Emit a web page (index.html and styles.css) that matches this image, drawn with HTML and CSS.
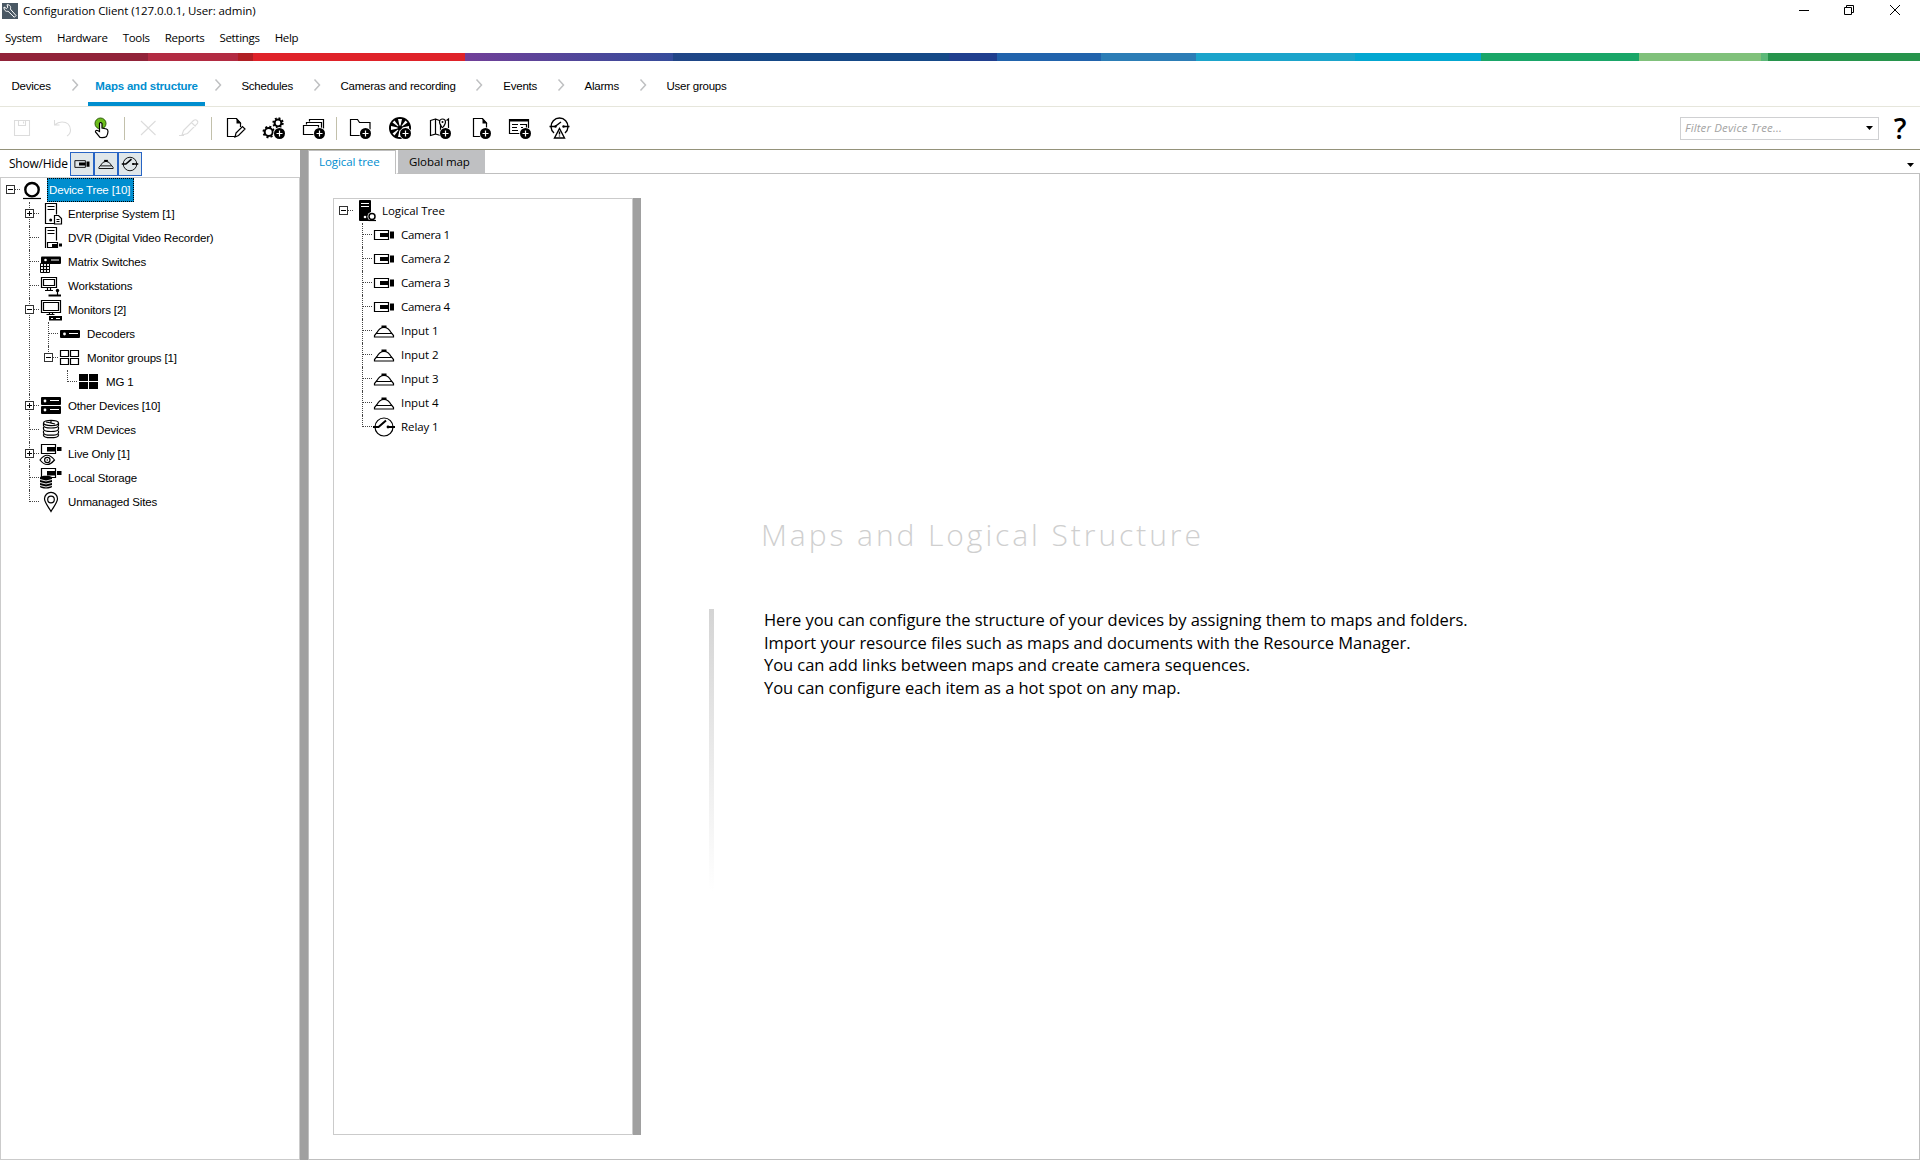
FILE: index.html
```html
<!DOCTYPE html>
<html lang="en">
<head>
<meta charset="utf-8">
<title>Configuration Client</title>
<link rel="stylesheet" href="styles.css">
</head>
<body>
<svg class="sprite" aria-hidden="true">
  <defs>
    <g id="plus"><circle cx="17.5" cy="17.5" r="6.2" fill="#fff"/><circle cx="17.5" cy="17.5" r="5.5"/><path d="M14.5 17.5h6M17.5 14.5v6" stroke="#fff" stroke-width="1.2"/></g>
    <symbol id="i-camera" viewBox="0 0 24 24"><path d="M2.5 7.5h14v9h-14z" class="ln"/><path d="M8 10h8.500v4H8zM18 8.500h4v7h-4z"/></symbol>
    <symbol id="i-input" viewBox="0 0 24 24"><path d="M2.500 18v-1.500L5 13.500Q7.500 8.500 12 8.500T19 13.500l2.500 3v1.500z M4.500 14.500h15" class="ln"/><path d="M9.500 6.500h5V9h-5z"/></symbol>
    <symbol id="i-relay" viewBox="0 0 24 24"><circle cx="12" cy="12" r="9" class="ln"/><path d="M1 12h5.500L14 5.500M16 12h7" class="ln2"/><circle cx="16" cy="12" r="1.400"/></symbol>
    <symbol id="i-root" viewBox="0 0 24 24"><circle cx="12" cy="11.700" r="6.700" fill="none" stroke="#000" stroke-width="2.400"/><path d="M3 20.500h18" class="ln"/></symbol>
    <symbol id="i-enterprise" viewBox="0 0 24 24"><path d="M15 21.500H6.500v-20h11v11M8.500 4.500h7M8.500 7.500h7" class="ln"/><circle cx="11.700" cy="18" r="1.500"/><path d="M15.500 13.500h4l3 3v5.500h-7zM17.500 17.500h3M17.500 19.500h3" class="ln"/></symbol>
    <symbol id="i-dvr" viewBox="0 0 24 24"><path d="M6.500 22v-20.500h11v13M8.500 4.500h7M8.500 7.500h7M8.500 16.500h10v5h-10z" class="ln"/><path d="M13 18h6v3h-6zM20 17.500h3v3h-3z"/></symbol>
    <symbol id="i-matrix" viewBox="0 0 24 24"><rect x="2" y="6.500" width="20" height="7.500" rx="1"/><circle cx="6.500" cy="10" r="1.300" fill="#fff"/><path d="M12 10h8" stroke="#fff"/><path d="M1.500 13.500h9v9h-9z" fill="#fff" stroke="#000"/><path d="M4.500 13.500v9M7.500 13.500v9M1.500 16.500h9M1.500 19.500h9" class="ln"/></symbol>
    <symbol id="i-workstation" viewBox="0 0 24 24"><path d="M2.500 3.500h15v10h-15zM4.500 5.500h11v6h-11zM8.500 14v2.500M11.500 14v2.500M6 16.500h8M18.500 17v4" class="ln"/><circle cx="18.500" cy="16.500" r="1.700"/><path d="M9.500 21.500H22" class="ln2"/></symbol>
    <symbol id="i-monitor" viewBox="0 0 24 24"><path d="M2.500 2.500h19v12h-19zM4.500 4.500h15v8h-15zM10.500 15v2M13.500 15v2M7.500 16.500h8" class="ln"/><path d="M10 18h13v4.500H10z"/><path d="M12 20.500h2M17 20.500h4" stroke="#fff"/></symbol>
    <symbol id="i-decoder" viewBox="0 0 24 24"><rect x="2" y="8" width="20" height="8" rx="1"/><circle cx="6.500" cy="12" r="1.400" fill="#fff"/><path d="M11 11.500h9" stroke="#fff"/></symbol>
    <symbol id="i-group" viewBox="0 0 24 24"><path d="M2.500 4.500h8v6h-8zM12.500 4.500h8v6h-8zM2.500 12.500h8v6h-8zM12.500 12.500h8v6h-8z" class="ln"/></symbol>
    <symbol id="i-mg" viewBox="0 0 24 24"><path d="M2 4h9v7H2zM12 4h9v7h-9zM2 12h9v7H2zM12 12h9v7h-9z"/></symbol>
    <symbol id="i-other" viewBox="0 0 24 24"><rect x="2" y="3" width="20" height="8" rx="1"/><rect x="2" y="12" width="20" height="8" rx="1"/><circle cx="6" cy="7" r="1.400" fill="#fff"/><circle cx="6" cy="16" r="1.400" fill="#fff"/><path d="M11 6.500h9M11 15.500h9" stroke="#fff"/></symbol>
    <symbol id="i-vrm" viewBox="0 0 24 24"><ellipse cx="12" cy="5" rx="7.500" ry="2.700" class="ln"/><path d="M4.500 5v2.500c0 3.300 15 3.300 15 0V5M4.500 9v2c0 3.300 15 3.300 15 0V9M4.500 12.700v2c0 3.300 15 3.300 15 0v-2M4.500 16.300v.9c0 3.300 15 3.300 15 0v-.9M12 2.500V5l4 1M12 5l-5-1" class="ln"/></symbol>
    <symbol id="i-live" viewBox="0 0 24 24"><path d="M2.500 11.500v-9h14v9z" class="ln"/><path d="M8 5h8.500v4.500H8zM18 5h4.500v4H18z"/><path d="M1 18q7-9.500 14.500 0-7.500 9-14.500 0z" fill="#fff" stroke="#000" stroke-width="1.200"/><circle cx="8.300" cy="18" r="2.700" class="ln"/><circle cx="8.300" cy="18" r=".8"/></symbol>
    <symbol id="i-local" viewBox="0 0 24 24"><path d="M2.500 11.500v-9h14v9z" class="ln"/><path d="M8 5h8.500v4.500H8zM18 5h4.500v4H18z"/><path d="M1 11.500c0-2.500 12-2.500 12 0v9c0 2.700-12 2.700-12 0z"/><path d="M1 13.500q6 3 12 0M1 16.500q6 3 12 0M1 19.500q6 3 12 0" fill="none" stroke="#fff" stroke-width=".9"/></symbol>
    <symbol id="i-pin" viewBox="0 0 24 24"><path d="M12 21.500C9 16 5.500 12.500 5.500 8.800a6.500 6.500 0 0 1 13 0C18.500 12.500 15 16 12 21.500z" class="ln"/><circle cx="12" cy="9.500" r="3.300" class="ln"/></symbol>
    <symbol id="i-logical" viewBox="0 0 24 24"><rect x="6" y="1" width="12" height="21" rx="1"/><path d="M8 4.500h8M8 7.500h8" stroke="#fff"/><circle cx="12" cy="18" r="1.300" fill="#fff"/><circle cx="19" cy="17.500" r="4.500" fill="#fff"/><circle cx="19" cy="17.500" r="3" fill="none" stroke="#000" stroke-width="1.500"/><path d="M15.500 21.500h7.500" class="ln"/></symbol>
    <symbol id="t-save" viewBox="0 0 24 24"><path d="M4.500 4.500h15v15h-15zM8.500 4.500v5h7v-5M13.500 5.500v2" class="off"/></symbol>
    <symbol id="t-undo" viewBox="0 0 24 24"><path d="M4.500 4v5h5M4.500 9Q8 6 12 6q8 0 8.500 8 0 4-3.500 6" class="off"/></symbol>
    <symbol id="t-hand" viewBox="0 0 24 24"><circle cx="11.500" cy="7.500" r="5.500" fill="#6cbd1b" stroke="#2d5c08"/><path d="M10.500 15.500V7.500q1-2 2.500 0V12l4.500 1q1.500.5 1.500 2.500-.2 3-1.500 5-2 1.500-6.500 1l-4.500-5.500q-.3-2 2-1.500z" fill="#fff" stroke="#000" stroke-width="1.200"/></symbol>
    <symbol id="t-x" viewBox="0 0 24 24"><path d="M5 5l14.500 14M19.500 5L5 19" class="off"/></symbol>
    <symbol id="t-pencil" viewBox="0 0 24 24"><path d="M7.500 14.500L17.500 4.500q2-1.500 3.500 0t.5 3L11.500 17.500l-5.500 1.500zM3 19.500h5M15.500 6.500l4 4" class="off"/></symbol>
    <symbol id="t-docedit" viewBox="0 0 24 24"><path d="M10 20.500H4.500v-18h9l4 4.500v4M9.500 20.500H12M13 17l6.500-6.500 2.500 2.500-6.500 6.500-3.500 1.500z" class="ln"/><path d="M13.500 2.500v5h5z"/></symbol>
    <symbol id="t-gears" viewBox="0 0 24 24"><circle cx="6.700" cy="16" r="4" class="ln2"/><circle cx="6.700" cy="16" r="5.200" fill="none" stroke="#000" stroke-width="2" stroke-dasharray="2 2.080"/><circle cx="16" cy="7" r="3.400" class="ln2"/><circle cx="16" cy="7" r="4.700" fill="none" stroke="#000" stroke-width="2" stroke-dasharray="1.850 1.840"/><use href="#plus"/></symbol>
    <symbol id="t-cards" viewBox="0 0 24 24"><path d="M14 18.500H2.500v-9h15v4M5.500 8.500v-2h15v6M8.500 5.500v-2h14v9" class="ln"/><use href="#plus" x="1"/></symbol>
    <symbol id="t-folder" viewBox="0 0 24 24"><path d="M13 19.500H2.500v-16h7l2 3h10.500v7" class="ln"/><use href="#plus"/></symbol>
    <symbol id="t-wheel" viewBox="0 0 24 24"><circle cx="12" cy="12" r="11"/><path d="M12 12L10 3h4zM12 12L21 10v4zM12 12L3 10v4zM12 12L10 21h4zM12 12L4.500 6.500l2-2zM12 12l7.500-5.500-2-2zM12 12L4.500 17.500l2 2z" fill="#fff"/><circle cx="12" cy="12" r="2.500"/><use href="#plus"/></symbol>
    <symbol id="t-map" viewBox="0 0 24 24"><path d="M2.500 4.500l5-1.500v15l-5 1.500zM7.500 3l4 1.500M7.500 18l5 1.500M18.500 4.500l2-1.500v9M12.500 8v11M14.500 12Q11.500 8 11.500 6a3 3 0 0 1 6 0q0 2-3 6z" class="ln"/><circle cx="14.500" cy="6" r="1"/><use href="#plus"/></symbol>
    <symbol id="t-docplus" viewBox="0 0 24 24"><path d="M13 20.500H5.500v-18h9l4 4.500v6" class="ln"/><path d="M14.500 2.500v5h5z"/><use href="#plus"/></symbol>
    <symbol id="t-form" viewBox="0 0 24 24"><path d="M13 17.500H1.500v-14h19v9M4 8.500h6M4 11.500h5M4 14.500h6M12 8.500h6.500v4M13 11.500h2" class="ln"/><path d="M1 3h20v2.500H1z"/><use href="#plus"/></symbol>
    <symbol id="t-alarm" viewBox="0 0 24 24"><path d="M6 17a8.500 8.500 0 1 1 11 0M1.500 10.500h5.500L13 6M15.500 10.500h6M11.500 12.500l5 9.500h-10zM11.500 15.500v3M11.500 19.500v1" fill="none" stroke="#000" stroke-width="1.400"/><circle cx="7.500" cy="10.500" r="1.200"/><circle cx="15.500" cy="10.500" r="1.200"/></symbol>
  </defs>
</svg>
<div class="window">
  <header class="titlebar">
    <svg class="appicon" viewBox="0 0 16 16"><path d="M0 0h16v16H0z" fill="#4a5864"/><path d="M2 4l2.500 1.500 1.300-1.200L5 1.800c3-.3 4.300 2 3.300 4.200l5.700 6.500-1.700 1.800L6 8.200C3.800 9 1.700 7 2 4z" fill="#4a5864" stroke="#fff"/></svg>
    <span class="title">Configuration Client (127.0.0.1, User: admin)</span>
    <svg class="winbtns" viewBox="0 0 104 12"><path d="M1 6.500h10M46.500 3.500h7v7h-7zM48.500 3.500v-2h7v7h-2M92 1l10 10M102 1L92 11" fill="none" stroke="#000"/></svg>
  </header>
  <nav class="menubar"><span>System</span><span>Hardware</span><span>Tools</span><span>Reports</span><span>Settings</span><span>Help</span></nav>
  <div class="stripe"></div>
  <nav class="pages">
    <span class="page">Devices</span><svg class="chev" viewBox="0 0 6 12"><path d="M.5.500l5 5.500-5 5.500"/></svg>
    <span class="page active">Maps and structure</span><svg class="chev" viewBox="0 0 6 12"><path d="M.5.500l5 5.500-5 5.500"/></svg>
    <span class="page">Schedules</span><svg class="chev" viewBox="0 0 6 12"><path d="M.5.500l5 5.500-5 5.500"/></svg>
    <span class="page">Cameras and recording</span><svg class="chev" viewBox="0 0 6 12"><path d="M.5.500l5 5.500-5 5.500"/></svg>
    <span class="page">Events</span><svg class="chev" viewBox="0 0 6 12"><path d="M.5.500l5 5.500-5 5.500"/></svg>
    <span class="page">Alarms</span><svg class="chev" viewBox="0 0 6 12"><path d="M.5.500l5 5.500-5 5.500"/></svg>
    <span class="page">User groups</span>
  </nav>
  <div class="toolbar">
    <div class="tools g1"><svg><use href="#t-save"/></svg><svg><use href="#t-undo"/></svg><svg><use href="#t-hand"/></svg></div>
    <div class="tools g2"><svg><use href="#t-x"/></svg><svg><use href="#t-pencil"/></svg></div>
    <div class="tools g3"><svg><use href="#t-docedit"/></svg><svg><use href="#t-gears"/></svg><svg><use href="#t-cards"/></svg></div>
    <div class="tools g4"><svg><use href="#t-folder"/></svg><svg><use href="#t-wheel"/></svg><svg><use href="#t-map"/></svg><svg><use href="#t-docplus"/></svg><svg><use href="#t-form"/></svg><svg><use href="#t-alarm"/></svg></div>
    <div class="filter"><span class="hint">Filter Device Tree...</span><i class="caret"></i></div>
    <span class="help">?</span>
  </div>
  <main class="work">
    <aside class="devices">
      <div class="showhide"><span class="sh">Show/Hide</span><div class="toggles"><b><svg viewBox="0 0 24 24"><use href="#i-camera"/></svg></b><b><svg viewBox="0 0 24 24"><use href="#i-input"/></svg></b><b><svg viewBox="0 0 24 24"><use href="#i-relay"/></svg></b></div></div>
      <div class="treebox dev">
        <ul class="tree">
          <li><div class="row"><i class="ex minus"></i><svg><use href="#i-root"/></svg><span class="sel">Device Tree [10]</span></div>
            <ul>
              <li><div class="row"><i class="ex add"></i><svg><use href="#i-enterprise"/></svg><span>Enterprise System [1]</span></div></li>
              <li><div class="row"><svg><use href="#i-dvr"/></svg><span>DVR (Digital Video Recorder)</span></div></li>
              <li><div class="row"><svg><use href="#i-matrix"/></svg><span>Matrix Switches</span></div></li>
              <li><div class="row"><svg><use href="#i-workstation"/></svg><span>Workstations</span></div></li>
              <li><div class="row"><i class="ex minus"></i><svg><use href="#i-monitor"/></svg><span>Monitors [2]</span></div>
                <ul>
                  <li><div class="row"><svg><use href="#i-decoder"/></svg><span>Decoders</span></div></li>
                  <li><div class="row"><i class="ex minus"></i><svg><use href="#i-group"/></svg><span>Monitor groups [1]</span></div>
                    <ul><li><div class="row"><svg><use href="#i-mg"/></svg><span>MG 1</span></div></li></ul>
                  </li>
                </ul>
              </li>
              <li><div class="row"><i class="ex add"></i><svg><use href="#i-other"/></svg><span>Other Devices [10]</span></div></li>
              <li><div class="row"><svg><use href="#i-vrm"/></svg><span>VRM Devices</span></div></li>
              <li><div class="row"><i class="ex add"></i><svg><use href="#i-live"/></svg><span>Live Only [1]</span></div></li>
              <li><div class="row"><svg><use href="#i-local"/></svg><span>Local Storage</span></div></li>
              <li><div class="row"><svg><use href="#i-pin"/></svg><span>Unmanaged Sites</span></div></li>
            </ul>
          </li>
        </ul>
      </div>
    </aside>
    <div class="splitter"></div>
    <section class="content">
      <div class="tabs"><span class="tab on">Logical tree</span><span class="tab off-tab">Global map</span><div class="rest"><i class="caret"></i></div></div>
      <div class="body">
        <div class="treebox logical">
          <ul class="tree">
            <li><div class="row"><i class="ex minus"></i><svg><use href="#i-logical"/></svg><span>Logical Tree</span></div>
              <ul>
                <li><div class="row cam"><svg><use href="#i-camera"/></svg><span>Camera 1</span></div></li>
                <li><div class="row cam"><svg><use href="#i-camera"/></svg><span>Camera 2</span></div></li>
                <li><div class="row cam"><svg><use href="#i-camera"/></svg><span>Camera 3</span></div></li>
                <li><div class="row cam"><svg><use href="#i-camera"/></svg><span>Camera 4</span></div></li>
                <li><div class="row"><svg><use href="#i-input"/></svg><span>Input 1</span></div></li>
                <li><div class="row"><svg><use href="#i-input"/></svg><span>Input 2</span></div></li>
                <li><div class="row"><svg><use href="#i-input"/></svg><span>Input 3</span></div></li>
                <li><div class="row"><svg><use href="#i-input"/></svg><span>Input 4</span></div></li>
                <li><div class="row"><svg><use href="#i-relay"/></svg><span>Relay 1</span></div></li>
              </ul>
            </li>
          </ul>
        </div>
        <div class="splitter inner"></div>
        <article class="welcome">
          <h1>Maps and Logical Structure</h1>
          <div class="intro"><div class="rule"></div>
            <p>Here you can configure the structure of your devices by assigning them to maps and folders.<br>Import your resource files such as maps and documents with the Resource Manager.<br>You can add links between maps and create camera sequences.<br>You can configure each item as a hot spot on any map.</p>
          </div>
        </article>
      </div>
    </section>
  </main>
</div>
</body>
</html>
```
FILE: styles.css
```css
* { box-sizing: border-box; }
body { margin: 0; background: #fff; color: #000; font: 12px/16px "Open Sans", "Noto Sans", sans-serif; overflow: hidden; }
svg { display: block; flex: none; }
.sprite { position: absolute; width: 0; height: 0; }
.ln { fill: none; stroke: #000; stroke-width: 1.200; }
.ln2 { fill: none; stroke: #000; stroke-width: 2; }
.off { fill: none; stroke: #dcdcdc; stroke-width: 1.100; }
.window { display: flex; flex-direction: column; width: 1920px; height: 1160px; }

.titlebar { display: flex; align-items: center; height: 24px; padding: 0 18px 2px 2px; }
.appicon { width: 16px; height: 16px; margin-right: 5px; }
.title { font-size: 11.500px; letter-spacing: -.085px; }
.winbtns { width: 104px; height: 12px; margin-left: auto; margin-bottom: 2px; }
.menubar { display: flex; align-items: center; gap: 15px; height: 29px; padding: 0 0 2px 5px; font-size: 11.500px; letter-spacing: -.300px; }
.stripe { height: 8px; background: linear-gradient(90deg, #912339 148px, #b22b42 148px 238px, #b01f24 238px 253px, #df2229 253px 465px, #713f98 465px, #354c9b 673px, #214587 673px, #154987 768px 949px, #203f8f 949px 997px, #2163ac 997px 1101px, #2c7db6 1101px 1196px, #1ba4cb 1196px 1355px, #03a7d1 1355px 1481px, #1aa668 1481px 1639px, #80c17b 1639px 1761px, #5cb878 1761px 1768px, #27944c 1768px); }
.pages { display: flex; align-items: stretch; height: 46px; padding-left: 4.500px; border-bottom: 1px solid #e6e6dc; font: 11.500px/16px "Liberation Sans", sans-serif; letter-spacing: -.240px; }
.page { padding: 17px 7px 0; white-space: nowrap; }
.page.active { margin: 0 -4px 0 -3px; border-bottom: 4px solid #008ecf; color: #008ecf; font-weight: bold; letter-spacing: -.200px; }
.chev { width: 6px; height: 12px; margin: 18px 13.800px 0; fill: none; stroke: #bfc0c2; stroke-width: 1.500; overflow: visible; }

.toolbar { display: flex; align-items: center; height: 43px; padding: 0 10px; border-bottom: 1px solid #94927a; }
.tools { display: flex; }
.tools svg { width: 24px; height: 24px; }
.g1, .g2 { gap: 15.500px; }
.g3 { gap: 15px; }
.g4 { gap: 16px; }
.g2, .g3, .g4 { position: relative; margin-left: 23px; }
.g3 { margin-left: 23.500px; }
.g2::before, .g3::before, .g4::before { content: ""; position: absolute; left: -12px; top: 1px; width: 1px; height: 23px; background: #c2c0ab; }
.filter { display: flex; align-items: center; justify-content: space-between; width: 199px; height: 23px; margin-left: auto; padding: 0 5px 0 4px; border: 1px solid #cfd0d2; }
.hint { color: #a3a3a3; font-style: italic; font-size: 11.500px; letter-spacing: .130px; }
.caret { width: 7px; height: 4px; background: #000; clip-path: polygon(0 0, 100% 0, 50% 100%); }
.help { width: 20px; margin-left: 11px; font: 600 28px/26px "Open Sans", sans-serif; text-align: center; }

.work { display: flex; flex: 1; min-height: 0; }
.devices { display: flex; flex-direction: column; width: 300px; }
.showhide { display: flex; align-items: center; height: 27px; padding-left: 9px; }
.sh { width: 61px; letter-spacing: -.240px; white-space: nowrap; }
.toggles { display: flex; }
.toggles b { display: flex; align-items: center; justify-content: center; width: 24px; height: 24px; background: #e0e7ea; border: 1px solid #2764c4; }
.toggles svg { width: 18px; height: 18px; }
.treebox { border: 1px solid #cbcbcb; }
.dev { flex: 1; font: 11.500px/16px "Liberation Sans", sans-serif; letter-spacing: -.160px; }
.tree, .tree ul { margin: 0; padding: 0; list-style: none; }
.tree li { position: relative; }
.tree ul { padding-left: 19px; }
.tree ul > li::before { content: ""; position: absolute; left: 9px; top: 0; bottom: 0; border-left: 1px dotted #444; }
.tree ul > li:last-child::before { bottom: auto; height: 12px; }
.row { position: relative; display: flex; align-items: center; height: 24px; padding-left: 19px; white-space: nowrap; }
.row::before { content: ""; position: absolute; left: 10px; top: 11px; width: 9px; border-top: 1px dotted #444; }
.row svg { width: 24px; height: 24px; }
.row span { margin-left: 3px; padding: 0 2px; }
.row .sel { display: flex; align-items: center; min-width: 87px; height: 24px; background: #008ecf; color: #fff; border: 1px dotted #000; padding: 0 1px; }
.ex { position: absolute; left: 5px; top: 7px; width: 9px; height: 9px; border: 1px solid #333; background: linear-gradient(#000, #000) 50% 50% / 5px 1px no-repeat #fff; }
.ex.add { background: linear-gradient(#000, #000) 50% 50% / 5px 1px no-repeat, linear-gradient(#000, #000) 50% 50% / 1px 5px no-repeat #fff; }
.splitter { width: 8px; background: #a0a0a0; }

.content { display: flex; flex: 1; flex-direction: column; border: solid #bfbfbf; border-width: 0 0 1px 1px; }
.tabs { display: flex; height: 24px; font-size: 11.500px; letter-spacing: -.080px; }
.tab { padding: 4px 0 0 10px; }
.on { width: 87px; border-right: 1px solid #bfbfbf; border-top: 1px solid #bfbfbf; color: #008ecf; padding-top: 3px; }
.off-tab { width: 89px; border-left: 2px solid #fff; border-bottom: 1px solid #bfbfbf; background: #bfc0c2; background-clip: padding-box; padding-left: 11px; }
.rest { flex: 1; display: flex; justify-content: flex-end; padding: 13px 6px 0 0; border-bottom: 1px solid #bfbfbf; }
.body { display: flex; flex: 1; padding: 24px 0 24px 24px; border-right: 1px solid #bfbfbf; }
.logical { width: 300px; font-size: 11.500px; letter-spacing: -.080px; }
.cam { letter-spacing: -.330px; }
.welcome { padding: 315px 0 0 68px; }
h1 { margin: 0 0 0 52px; font: 300 30px/44px "Open Sans", sans-serif; color: #cfcfcf; letter-spacing: 2.930px; white-space: nowrap; }
.intro { display: flex; gap: 50px; margin-top: 52px; }
.rule { width: 5px; height: 282px; background: linear-gradient(#d4d4d4, #fff); }
p { margin: 0; font-size: 16.500px; line-height: 22.700px; letter-spacing: -.060px; white-space: nowrap; }
```
